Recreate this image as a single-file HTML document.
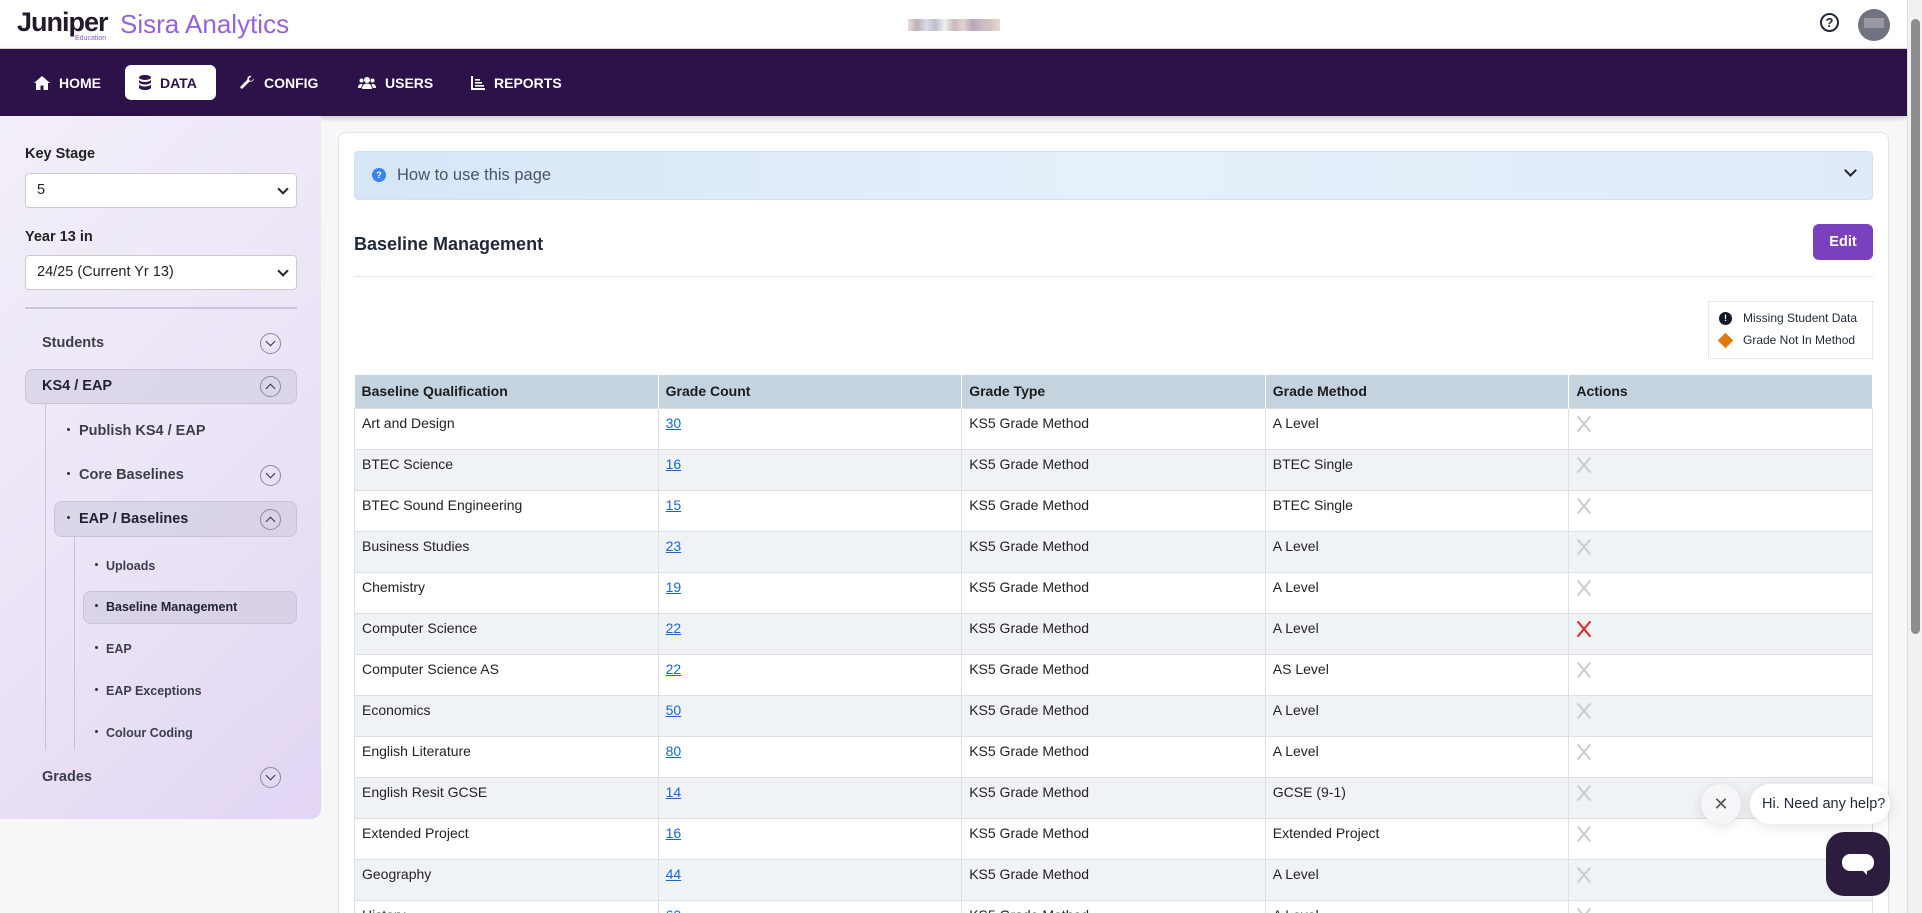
<!DOCTYPE html>
<html style="width:1922px;height:913px;overflow:hidden"><head><meta charset="utf-8"><style>
*{box-sizing:border-box;margin:0;padding:0}
body{width:1922px;height:913px;overflow:hidden;font-family:"Liberation Sans",Arial,sans-serif;background:#f7f7f8;position:relative;color:#1f2937}
.abs{position:absolute}
#hdr{left:0;top:0;width:1907px;height:49px;background:#fff;border-bottom:1px solid #ddd}
#nav{left:0;top:49px;width:1907px;height:67px;background:#2c1248;box-shadow:0 2px 5px rgba(0,0,0,.2)}
.ni{position:absolute;top:16px;height:35px;display:flex;align-items:center;gap:9px;color:#fff;font-weight:bold;font-size:14px;padding:0 14px}
.ni.act{background:#fff;color:#2c1248;border-radius:6px}
#side{left:0;top:116px;width:321px;height:703px;background:linear-gradient(135deg,#f2eef9 0%,#ece5f7 50%,#e1d5f3 100%);border-radius:0 0 10px 0}
.lbl{position:absolute;left:25px;font-size:14.5px;font-weight:bold;color:#222}
.sel{position:absolute;left:25px;width:272px;height:35px;background:#fff;border:1px solid #ccc;border-radius:4px;font-size:14.5px;padding:0 0 0 11px;line-height:33px;color:#222}
.sel:after{content:"";position:absolute;right:9px;top:11px;width:6px;height:6px;border-right:2px solid #222;border-bottom:2px solid #222;transform:rotate(45deg)}
.it{position:absolute;font-size:14.5px;font-weight:bold;color:#3b3f4a}
.box{position:absolute;background:rgba(200,195,215,.45);border:1px solid #c9c3d6;border-radius:8px}
.chev{position:absolute;width:21px;height:21px;border:1px solid #8d8a99;border-radius:50%}
.chev:after{content:"";position:absolute;left:6px;width:6px;height:6px;border-right:1.5px solid #333;border-bottom:1.5px solid #333}
.chev.d:after{top:4px;transform:rotate(45deg)}
.chev.u:after{top:8px;transform:rotate(-135deg)}
.dot{display:inline-block;width:3px;height:3px;background:#333;border-radius:50%;vertical-align:middle;margin-right:9px;position:relative;top:-2px}
.sm{font-size:12.5px}
#card{left:338px;top:132px;width:1551px;height:800px;background:#fff;border:1px solid #e3e3e6;border-radius:8px}
#tw{position:absolute;left:354px;top:375px;width:1519px;height:538px;overflow:hidden}
table{width:1519px;border-collapse:collapse;font-size:14px}
th{background:#c5d3de;height:33px;text-align:left;padding:0 7px;font-weight:bold;color:#1c1c1c;border-right:1px solid #fff;width:304px}
td{height:41px;vertical-align:top;padding:6px 7px 0;border:1px solid #dcdfe3;color:#222}
tr:nth-child(odd) td{background:#f0f3f6}
td a{color:#1a66cc;text-decoration:underline}
.x{display:inline-block;width:16px;height:16px;position:relative;top:1px}
.x:before,.x:after{content:"";position:absolute;left:7px;top:-2px;width:2px;height:20px;background:#c9cdd2;transform:rotate(40deg)}
.x:after{transform:rotate(-40deg)}
.x.r:before,.x.r:after{background:#e02424}
</style></head><body>
<div class="abs" id="hdr">
 <div class="abs" style="left:17px;top:7px;font-size:27px;font-weight:bold;color:#231a2e;letter-spacing:-1px">Juniper</div>
 <div class="abs" style="left:75px;top:35px;font-size:7px;color:#8a5bd6">Education</div>
 <div class="abs" style="left:120px;top:9px;font-size:26px;color:#9363d8">Sisra Analytics</div>
 <div class="abs" style="left:908px;top:19px;width:92px;height:12px;background:linear-gradient(90deg,#e8dcdc,#bfb0b5,#d8dbe5,#bdc0cf,#eef2ef,#cbb8b5,#dfd4d4,#b9a6b6,#c9bac7,#d3c2c2,#e8d8d2)"></div>
 <div class="abs" style="left:1820px;top:13px;width:19px;height:19px;border:2px solid #1f2937;border-radius:50%;font-size:13px;font-weight:bold;text-align:center;line-height:15px">?</div>
 <div class="abs" style="left:1858px;top:9px;width:32px;height:32px;border-radius:50%;background:#6f7480"><div style="margin:9px 0 0 6px;width:20px;height:10px;background:#9a98a3"></div></div>
</div>
<div class="abs" id="nav">
 <div class="ni" style="left:20px"><svg width="16" height="14" viewBox="0 0 16 14"><path d="M8 0L0 7h2v7h4.5V9.5h3V14H14V7h2z" fill="#fff"/></svg>HOME</div>
 <div class="ni act" style="left:125px;width:91px"><svg width="12" height="15" viewBox="0 0 12 15"><ellipse cx="6" cy="2.5" rx="6" ry="2.5" fill="#2c1248"/><path d="M0 4.5c0 1.4 2.7 2.5 6 2.5s6-1.1 6-2.5V7c0 1.4-2.7 2.5-6 2.5S0 8.4 0 7zM0 9c0 1.4 2.7 2.5 6 2.5S12 10.4 12 9v3.5C12 13.9 9.3 15 6 15s-6-1.1-6-2.5z" fill="#2c1248"/></svg>DATA</div>
 <div class="ni" style="left:226px"><svg width="15" height="15" viewBox="0 0 15 15"><path d="M14 3.5l-2.5 2.5-2-.5-.5-2L11.5 1C9.5.3 7 1.8 7.3 4.7L.8 11.2a1.4 1.4 0 002 2l6.5-6.5C12.2 7 13.7 5.5 14 3.5z" fill="#fff"/></svg>CONFIG</div>
 <div class="ni" style="left:344px"><svg width="18" height="14" viewBox="0 0 18 14"><circle cx="9" cy="4" r="3" fill="#fff"/><circle cx="3.5" cy="4.5" r="2" fill="#fff"/><circle cx="14.5" cy="4.5" r="2" fill="#fff"/><path d="M4 13c0-3.5 2-5.5 5-5.5s5 2 5 5.5zM0 12c0-2.5 1-4 3.5-4 .5 0 1 .1 1.3.3C3.8 9.3 3.3 10.5 3.2 12zM18 12c0-2.5-1-4-3.5-4-.5 0-1 .1-1.3.3 1 1 1.5 2.2 1.6 3.7z" fill="#fff"/></svg>USERS</div>
 <div class="ni" style="left:457px"><svg width="14" height="14" viewBox="0 0 14 14"><path d="M0 0h2v12h12v2H0zM4 3h5v1.6H4zM4 6h7v1.6H4zM4 9h9v1.6H4z" fill="#fff"/></svg>REPORTS</div>
</div>
<div class="abs" id="side">
 <div class="lbl" style="top:30px">Key Stage</div>
 <div class="sel" style="top:57px">5</div>
 <div class="lbl" style="top:113px">Year 13 in</div>
 <div class="sel" style="top:139px">24/25 (Current Yr 13)</div>
 <div class="abs" style="left:25px;top:191px;width:272px;height:2px;background:#cbc5d8"></div>
 <div class="it" style="left:42px;top:219px">Students</div><div class="chev d" style="left:260px;top:217px"></div>
 <div class="box" style="left:25px;top:253px;width:272px;height:35px"></div>
 <div class="it" style="left:42px;top:262px;color:#1f2230">KS4 / EAP</div><div class="chev u" style="left:260px;top:260px"></div>
 <div class="abs" style="left:45px;top:288px;width:1px;height:346px;background:#c8c2d4"></div>
 <div class="it" style="left:67px;top:307px"><span class="dot"></span>Publish KS4 / EAP</div>
 <div class="it" style="left:67px;top:351px"><span class="dot"></span>Core Baselines</div><div class="chev d" style="left:260px;top:349px"></div>
 <div class="box" style="left:54px;top:385px;width:243px;height:36px"></div>
 <div class="it" style="left:67px;top:395px;color:#1f2230"><span class="dot"></span>EAP / Baselines</div><div class="chev u" style="left:260px;top:393px"></div>
 <div class="abs" style="left:74px;top:421px;width:1px;height:213px;background:#c8c2d4"></div>
 <div class="it sm" style="left:95px;top:443px"><span class="dot" style="margin-right:8px"></span>Uploads</div>
 <div class="box" style="left:83px;top:475px;width:214px;height:33px"></div>
 <div class="it sm" style="left:95px;top:484px;color:#1f2230"><span class="dot" style="margin-right:8px"></span>Baseline Management</div>
 <div class="it sm" style="left:95px;top:526px"><span class="dot" style="margin-right:8px"></span>EAP</div>
 <div class="it sm" style="left:95px;top:568px"><span class="dot" style="margin-right:8px"></span>EAP Exceptions</div>
 <div class="it sm" style="left:95px;top:610px"><span class="dot" style="margin-right:8px"></span>Colour Coding</div>
 <div class="it" style="left:42px;top:653px">Grades</div><div class="chev d" style="left:260px;top:651px"></div>
</div>
<div class="abs" id="card"></div>
<div class="abs" style="left:354px;top:151px;width:1519px;height:49px;background:linear-gradient(90deg,#d6e6f7,#e6f0fa 50%,#dfebf8);border:1px solid #d3e0ee;border-radius:4px">
 <div class="abs" style="left:17px;top:16px;width:14px;height:14px;border-radius:50%;background:#3b82f6;color:#fff;font-size:9px;font-weight:bold;text-align:center;line-height:14px">?</div>
 <div class="abs" style="left:42px;top:14px;font-size:16.5px;color:#4b5563">How to use this page</div>
 <div class="abs" style="left:1491px;top:14px;width:9px;height:9px;border-right:2px solid #222;border-bottom:2px solid #222;transform:rotate(45deg)"></div>
</div>
<div class="abs" style="left:354px;top:234px;font-size:18px;font-weight:bold;color:#1f2937">Baseline Management</div>
<div class="abs" style="left:1813px;top:224px;width:60px;height:36px;background:#7a40bd;border-radius:6px;color:#fff;font-weight:bold;font-size:14.5px;text-align:center;line-height:36px">Edit</div>
<div class="abs" style="left:354px;top:276px;width:1519px;height:1px;background:#e2e4e8"></div>
<div class="abs" style="left:1708px;top:301px;width:165px;height:58px;border:1px dotted #d4d4d4;font-size:12px;color:#1f2937">
 <div class="abs" style="left:10px;top:10px;width:13px;height:13px;border-radius:50%;background:#111827;color:#fff;font-size:9px;font-weight:bold;text-align:center;line-height:13px">!</div>
 <div class="abs" style="left:34px;top:9px">Missing Student Data</div>
 <div class="abs" style="left:11px;top:33px;width:11px;height:11px;background:#e07b0a;transform:rotate(45deg)"></div>
 <div class="abs" style="left:34px;top:31px">Grade Not In Method</div>
</div>
<div id="tw"><table>
<tr><th>Baseline Qualification</th><th>Grade Count</th><th>Grade Type</th><th>Grade Method</th><th>Actions</th></tr>
<tr><td>Art and Design</td><td><a>30</a></td><td>KS5 Grade Method</td><td>A Level</td><td><span class="x"></span></td></tr>
<tr><td>BTEC Science</td><td><a>16</a></td><td>KS5 Grade Method</td><td>BTEC Single</td><td><span class="x"></span></td></tr>
<tr><td>BTEC Sound Engineering</td><td><a>15</a></td><td>KS5 Grade Method</td><td>BTEC Single</td><td><span class="x"></span></td></tr>
<tr><td>Business Studies</td><td><a>23</a></td><td>KS5 Grade Method</td><td>A Level</td><td><span class="x"></span></td></tr>
<tr><td>Chemistry</td><td><a>19</a></td><td>KS5 Grade Method</td><td>A Level</td><td><span class="x"></span></td></tr>
<tr><td>Computer Science</td><td><a>22</a></td><td>KS5 Grade Method</td><td>A Level</td><td><span class="x r"></span></td></tr>
<tr><td>Computer Science AS</td><td><a>22</a></td><td>KS5 Grade Method</td><td>AS Level</td><td><span class="x"></span></td></tr>
<tr><td>Economics</td><td><a>50</a></td><td>KS5 Grade Method</td><td>A Level</td><td><span class="x"></span></td></tr>
<tr><td>English Literature</td><td><a>80</a></td><td>KS5 Grade Method</td><td>A Level</td><td><span class="x"></span></td></tr>
<tr><td>English Resit GCSE</td><td><a>14</a></td><td>KS5 Grade Method</td><td>GCSE (9-1)</td><td><span class="x"></span></td></tr>
<tr><td>Extended Project</td><td><a>16</a></td><td>KS5 Grade Method</td><td>Extended Project</td><td><span class="x"></span></td></tr>
<tr><td>Geography</td><td><a>44</a></td><td>KS5 Grade Method</td><td>A Level</td><td><span class="x"></span></td></tr>
<tr><td>History</td><td><a>60</a></td><td>KS5 Grade Method</td><td>A Level</td><td><span class="x"></span></td></tr>
</table></div>
<div class="abs" style="left:1701px;top:784px;width:40px;height:40px;border-radius:50%;background:#f5f6f7;box-shadow:0 2px 12px rgba(0,0,0,.12);text-align:center;line-height:40px;font-size:18px;color:#555">✕</div>
<div class="abs" style="left:1750px;top:784px;width:140px;height:40px;border-radius:20px;background:#fff;box-shadow:0 2px 14px rgba(0,0,0,.12);font-size:14.5px;line-height:40px;padding-left:12px;color:#1f2937">Hi. Need any help?</div>
<div class="abs" style="left:1826px;top:832px;width:64px;height:64px;border-radius:18px;background:#2c1d3e">
 <div class="abs" style="left:16px;top:22px;width:32px;height:17px;border-radius:8px;background:#fff"></div>
 <div class="abs" style="left:36px;top:38px;width:0;height:0;border-left:5px solid transparent;border-top:5px solid #fff"></div>
</div>
<div class="abs" style="left:1907px;top:0;width:15px;height:913px;background:#f1f1f1;border-left:1px solid #ddd">
 <div class="abs" style="left:3px;top:19px;width:9px;height:615px;background:#8d8d8d;border-radius:5px"></div>
</div>
</body></html>
